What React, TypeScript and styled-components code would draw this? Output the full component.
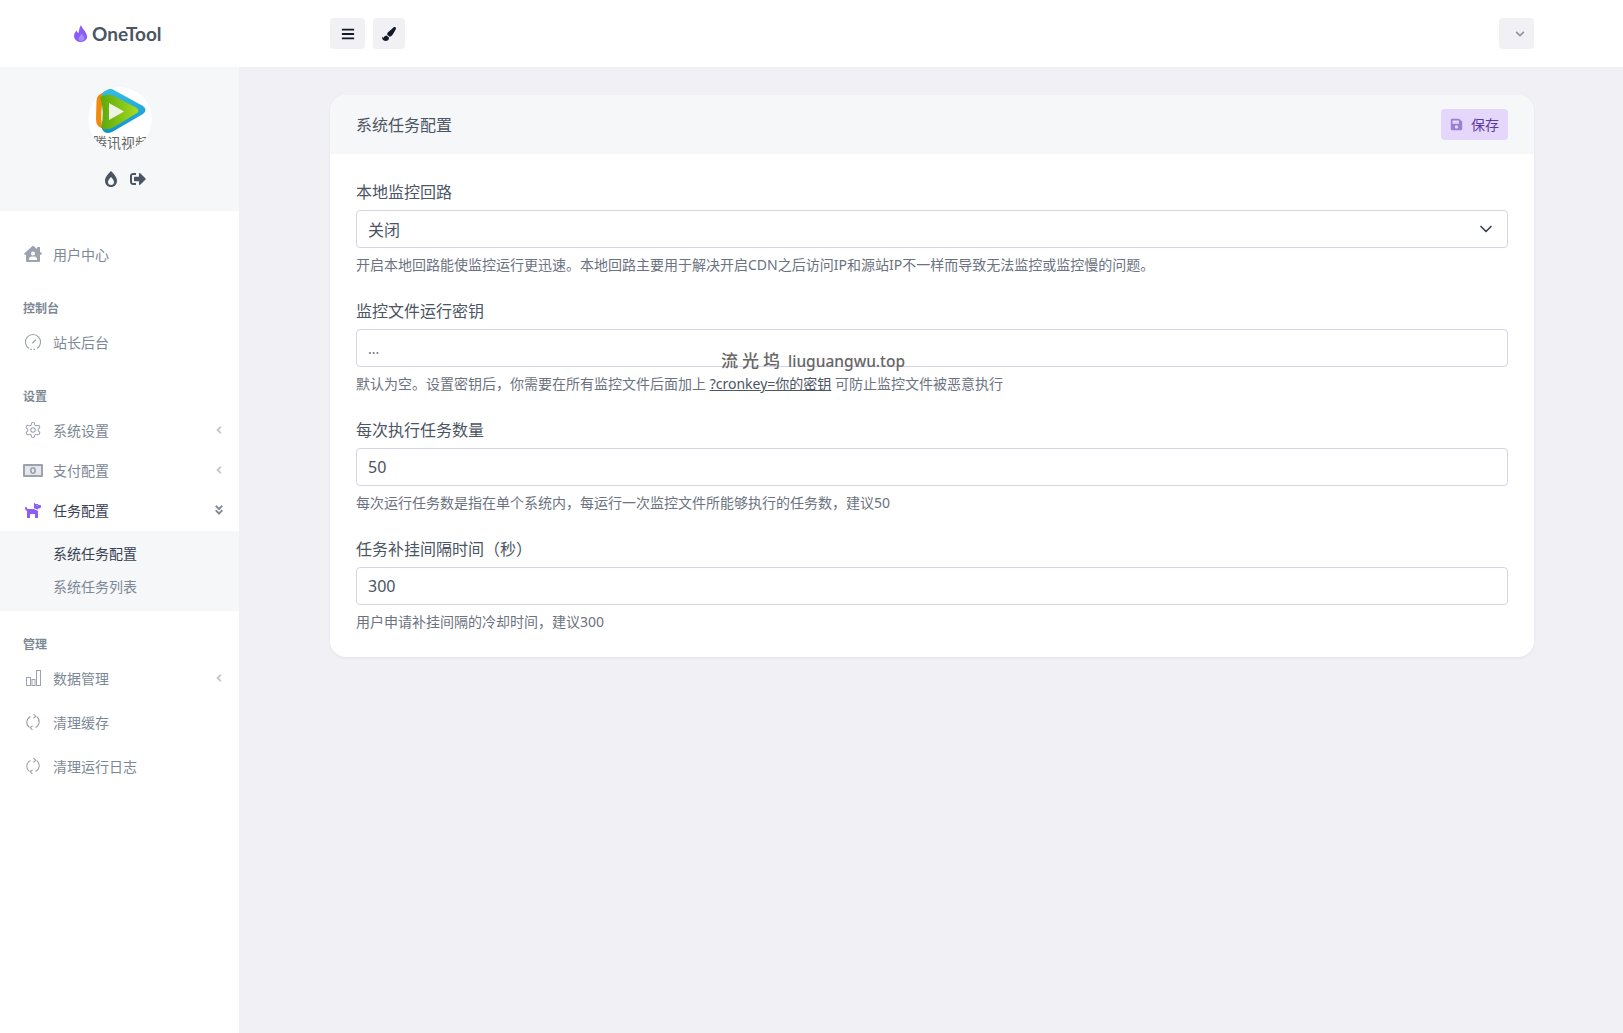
import React from 'react';
import styled, { createGlobalStyle } from 'styled-components';
import { ChevronDown } from 'lucide-react';
import {
  FaAngleDoubleDown,
  FaAngleLeft,
  FaBars,
  FaBurn,
  FaChevronDown,
  FaDog,
  FaHouseUser,
  FaPaintBrush,
  FaSave,
  FaSignOutAlt,
} from 'react-icons/fa';

const GlobalStyle = createGlobalStyle`
  html, body { margin: 0; padding: 0; }
  body {
    background: #f0f0f5;
    font-family: "Noto Sans", "Noto Sans CJK SC", sans-serif;
    color: #4b5563;
  }
  * { box-sizing: border-box; }
`;

const Page = styled.div`
  position: relative;
  width: 1623px;
  height: 1033px;
  overflow: hidden;
  display: flex;
  flex-direction: column;
`;

const Header = styled.header`
  height: 67px;
  flex: none;
  background: #fff;
  display: flex;
  align-items: center;
  padding-right: 89px;
`;

const Brand = styled.div`
  width: 330px;
  padding-left: 74px;
  padding-bottom: 1px;
  display: flex;
  align-items: center;
  gap: 4px;
  font-family: Lato, sans-serif;
  font-size: 19px;
  font-weight: 700;
  color: #4b5563;
`;

const ToolButton = styled.button<{ $wide?: boolean }>`
  width: ${(p) => (p.$wide ? 35 : 32)}px;
  height: 31px;
  margin-right: 8px;
  border: 0;
  border-radius: 4px;
  background: #f0f0f5;
  color: #111827;
  font-size: 14px;
  display: flex;
  align-items: center;
  justify-content: center;
  padding: 0;
`;

const HeaderSpacer = styled.div`
  flex: 1;
`;

const UserButton = styled(ToolButton)`
  width: 35px;
  margin-right: 0;
  padding-left: 7px;
  color: #8b95a1;
  font-size: 10px;
`;

const Body = styled.div`
  flex: 1;
  display: flex;
  min-height: 0;
`;

const Sidebar = styled.aside`
  width: 239px;
  flex: none;
  background: #fff;
`;

const Profile = styled.div`
  height: 144px;
  background: #f6f7f9;
  padding-top: 20px;
  display: flex;
  flex-direction: column;
  align-items: center;
`;

const ProfileIcons = styled.div`
  margin-top: 20px;
  margin-left: 10px;
  display: flex;
  gap: 11px;
  color: #4b5563;
  font-size: 16px;
  align-items: center;
`;

const Nav = styled.nav`
  padding-top: 21px;
`;

const NavItem = styled.div<{ $height?: number; $active?: boolean }>`
  height: ${(p) => p.$height ?? 40}px;
  padding: 0 14px 0 24px;
  display: flex;
  align-items: center;
  font-size: 14px;
  color: ${(p) => (p.$active ? '#374151' : '#7d8896')};
`;

const NavIcon = styled.span<{ $active?: boolean }>`
  width: 29px;
  flex: none;
  display: flex;
  align-items: center;
  color: ${(p) => (p.$active ? '#8b5cf6' : '#9ca3af')};
  font-size: 18px;
`;

const MoneyNavIcon = styled(NavIcon)`
  margin-left: -1px;
  width: 30px;
`;

const NavLabel = styled.span`
  flex: 1;
`;

const Arrow = styled.span`
  color: #c2c7ce;
  font-size: 12px;
  display: flex;
  align-items: center;
`;

const ActiveArrow = styled(Arrow)`
  color: #7d8896;
`;

const NavHeading = styled.div<{ $top?: number; $bottom?: number }>`
  margin-top: ${(p) => p.$top ?? 23}px;
  margin-bottom: ${(p) => p.$bottom ?? 1}px;
  height: 20px;
  line-height: 20px;
  padding-left: 23px;
  font-size: 12px;
  font-weight: 700;
  color: #7d8896;
`;

const SubMenu = styled.div`
  height: 80px;
  margin-top: 1px;
  background: #f6f7f9;
  padding-top: 6px;
`;

const SubItem = styled.div<{ $active?: boolean }>`
  height: 33px;
  line-height: 33px;
  padding-left: 53px;
  font-size: 14px;
  color: ${(p) => (p.$active ? '#374151' : '#7d8896')};
`;

const Main = styled.main`
  flex: 1;
  padding: 28px 89px 0 91px;
`;

const Card = styled.section`
  background: #fff;
  border-radius: 16px;
  overflow: hidden;
  box-shadow: 0 1px 3px rgba(90, 90, 120, 0.08);
`;

const CardHeader = styled.div`
  height: 59px;
  background: #f6f7f9;
  padding: 0 26px;
  display: flex;
  align-items: center;
  justify-content: space-between;
  font-size: 16px;
  color: #4b5563;
`;

const CardTitle = styled.span`
  margin-top: -2px;
`;

const SaveButton = styled.button`
  width: 67px;
  height: 31px;
  border: 0;
  border-radius: 4px;
  background: #e5d6fb;
  color: #5b3a9f;
  font-family: inherit;
  font-size: 14px;
  display: flex;
  align-items: center;
  justify-content: center;
  gap: 8px;
  padding: 0;
  svg { color: #9a80cf; font-size: 13px; }
  span { margin-top: -2px; }
`;

const Form = styled.form`
  padding: 26px 26px 25px;
`;

const Field = styled.div`
  margin-bottom: 24px;
  &:last-child { margin-bottom: 0; }
`;

const FieldLabel = styled.label`
  display: block;
  height: 24px;
  line-height: 24px;
  margin-bottom: 6px;
  font-size: 16px;
  color: #4b5563;
`;

const InputBox = styled.div`
  height: 38px;
  border: 1px solid #d6d3e6;
  border-radius: 4px;
  padding: 0 11px;
  display: flex;
  align-items: center;
  justify-content: space-between;
  font-size: 16px;
  color: #4b5563;
`;

const Placeholder = styled.span`
  font-size: 14px;
  color: #6b7280;
`;

const SelectArrow = styled.span`
  display: flex;
  color: #374151;
`;

const Help = styled.p`
  margin: 7px 0 0;
  height: 20px;
  line-height: 20px;
  font-size: 14px;
  color: #6b7280;
  a { color: #4b5563; text-decoration: underline; }
`;

const Watermark = styled.div`
  position: absolute;
  left: 721px;
  top: 349px;
  font-size: 15.5px;
  font-weight: 500;
  line-height: 24px;
  color: #666;
  white-space: nowrap;
  span { letter-spacing: 4px; font-size: 17px; }
`;

const BrandFlame = () => (
  <svg width="14" height="17" viewBox="0 0 14 17">
    <path d="M7 0C7.500 3 12 6 13 10.500C13.800 14 11 17 7 17C3 17 0 14.300 0 11C0 8.500 1.500 6.500 2.800 5.500C3 7 3.800 8 4.500 8C5 5 5.500 2 7 0Z" fill="#8b5cf6" />
    <path d="M7.500 8.500C9 10.500 10.500 12 10.500 13.500C10.500 15 9 16 7 16C5.500 16 4.500 15.300 4.500 14C4.500 12.500 6.500 11 7.500 8.500Z" fill="#a78bfa" />
  </svg>
);

const GaugeIcon = () => (
  <svg width="18" height="18" viewBox="0 0 18 18" fill="none" stroke="currentColor" strokeWidth="1.1">
    <path d="M5 15.5A7.6 7.6 0 1 1 13 15.5" />
    <path d="M6.5 16.4h5" strokeDasharray="1.5 1.5" />
    <path d="M8.4 10.2l3.4-3.4" strokeWidth="1.4" />
  </svg>
);

const GearIcon = () => (
  <svg width="18" height="18" viewBox="0 0 24 24" fill="none" stroke="currentColor" strokeWidth="1.4">
    <path d="M12.22 2h-.44a2 2 0 0 0-2 2v.18a2 2 0 0 1-1 1.73l-.43.25a2 2 0 0 1-2 0l-.15-.08a2 2 0 0 0-2.73.73l-.22.38a2 2 0 0 0 .73 2.73l.15.1a2 2 0 0 1 1 1.72v.51a2 2 0 0 1-1 1.74l-.15.09a2 2 0 0 0-.73 2.73l.22.38a2 2 0 0 0 2.73.73l.15-.08a2 2 0 0 1 2 0l.43.25a2 2 0 0 1 1 1.73V20a2 2 0 0 0 2 2h.44a2 2 0 0 0 2-2v-.18a2 2 0 0 1 1-1.73l.43-.25a2 2 0 0 1 2 0l.15.08a2 2 0 0 0 2.73-.73l.22-.39a2 2 0 0 0-.73-2.73l-.15-.08a2 2 0 0 1-1-1.74v-.5a2 2 0 0 1 1-1.74l.15-.09a2 2 0 0 0 .73-2.73l-.22-.38a2 2 0 0 0-2.73-.73l-.15.08a2 2 0 0 1-2 0l-.43-.25a2 2 0 0 1-1-1.73V4a2 2 0 0 0-2-2z" />
    <circle cx="12" cy="12" r="3" />
  </svg>
);

const MoneyIcon = () => (
  <svg width="20" height="13" viewBox="0 0 20 13">
    <rect width="20" height="13" rx="1" fill="#9ca3af" />
    <rect x="2" y="2" width="16" height="9" fill="#e5e7eb" />
    <ellipse cx="10" cy="6.500" rx="3" ry="3.500" fill="#9ca3af" />
    <ellipse cx="10" cy="6.500" rx="1.300" ry="2" fill="#e5e7eb" />
  </svg>
);

const ChartIcon = () => (
  <svg width="18" height="18" viewBox="0 0 18 18" fill="none" stroke="currentColor" strokeWidth="1">
    <rect x="2.5" y="8.500" width="4" height="8" />
    <rect x="8" y="10.5" width="3" height="6" />
    <rect x="12.5" y="1.5" width="4" height="15" />
  </svg>
);

const RefreshIcon = () => (
  <svg width="18" height="18" viewBox="0 0 18 18" fill="none" stroke="currentColor" strokeWidth="1.1">
    <path d="M6.5 3.4A6.6 6.6 0 0 0 5.2 14.4" />
    <path d="M11.5 14.6A6.6 6.6 0 0 0 12.8 3.6" />
    <path d="M9.6 1.2L11.8 3.4 9.4 5.2" />
    <path d="M8.4 16.8L6.2 14.6 8.6 12.8" />
  </svg>
);

// drawn logo, the source is a small raster avatar
const Avatar = () => (
  <svg width="64" height="64" viewBox="0 0 64 64">
    <defs>
      <clipPath id="avatar-clip">
        <circle cx="32" cy="32" r="32" />
      </clipPath>
      <linearGradient id="avatar-blue" x1="0" y1="0" x2="0" y2="1">
        <stop offset="0" stopColor="#36bde6" />
        <stop offset="1" stopColor="#1291cc" />
      </linearGradient>
      <linearGradient id="avatar-green" x1="0" y1="0" x2="1" y2="0">
        <stop offset="0" stopColor="#5aa80c" />
        <stop offset="1" stopColor="#a6dc1e" />
      </linearGradient>
    </defs>
    <g clipPath="url(#avatar-clip)">
      <circle cx="32" cy="32" r="32" fill="#fff" />
      <path d="M14 6Q9 7 8.500 14L8 32Q8 40 14 41Q12 24 16 6Z" fill="#f08a0c" />
      <path d="M14 7Q17 0 24 2L55 19Q60 23 55 27L24 45Q17 48 14 42Q17 24 14 7Z" fill="url(#avatar-blue)" />
      <path d="M12 10Q19 6 26 9L49 21Q52 24 49 26L26 40Q19 44 13 41Q17 25 12 10Z" fill="url(#avatar-green)" />
      <path d="M21 16L36 24.500L21 33Z" fill="#eef3e4" />
      <text x="33" y="61" textAnchor="middle" fontSize="14" fill="#666" fontFamily="'Noto Sans CJK SC', sans-serif">腾讯视频</text>
    </g>
  </svg>
);

export default function App() {
  return (
    <Page>
      <GlobalStyle />
      <Header>
        <Brand>
          <BrandFlame />
          OneTool
        </Brand>
        <ToolButton $wide>
          <FaBars />
        </ToolButton>
        <ToolButton>
          <FaPaintBrush />
        </ToolButton>
        <HeaderSpacer />
        <UserButton>
          <FaChevronDown />
        </UserButton>
      </Header>
      <Body>
        <Sidebar>
          <Profile>
            <Avatar />
            <ProfileIcons>
              <FaBurn />
              <FaSignOutAlt />
            </ProfileIcons>
          </Profile>
          <Nav>
            <NavItem $height={44}>
              <NavIcon><FaHouseUser /></NavIcon>
              <NavLabel>用户中心</NavLabel>
            </NavItem>
            <NavHeading>控制台</NavHeading>
            <NavItem $height={44}>
              <NavIcon><GaugeIcon /></NavIcon>
              <NavLabel>站长后台</NavLabel>
            </NavItem>
            <NavHeading $bottom={3}>设置</NavHeading>
            <NavItem>
              <NavIcon><GearIcon /></NavIcon>
              <NavLabel>系统设置</NavLabel>
              <Arrow><FaAngleLeft /></Arrow>
            </NavItem>
            <NavItem>
              <MoneyNavIcon><MoneyIcon /></MoneyNavIcon>
              <NavLabel>支付配置</NavLabel>
              <Arrow><FaAngleLeft /></Arrow>
            </NavItem>
            <NavItem $active>
              <NavIcon $active><FaDog /></NavIcon>
              <NavLabel>任务配置</NavLabel>
              <ActiveArrow><FaAngleDoubleDown /></ActiveArrow>
            </NavItem>
            <SubMenu>
              <SubItem $active>系统任务配置</SubItem>
              <SubItem>系统任务列表</SubItem>
            </SubMenu>
            <NavHeading $top={24} $bottom={1}>管理</NavHeading>
            <NavItem $height={44}>
              <NavIcon><ChartIcon /></NavIcon>
              <NavLabel>数据管理</NavLabel>
              <Arrow><FaAngleLeft /></Arrow>
            </NavItem>
            <NavItem $height={44}>
              <NavIcon><RefreshIcon /></NavIcon>
              <NavLabel>清理缓存</NavLabel>
            </NavItem>
            <NavItem $height={44}>
              <NavIcon><RefreshIcon /></NavIcon>
              <NavLabel>清理运行日志</NavLabel>
            </NavItem>
          </Nav>
        </Sidebar>
        <Main>
          <Card>
            <CardHeader>
              <CardTitle>系统任务配置</CardTitle>
              <SaveButton type="button">
                <FaSave />
                <span>保存</span>
              </SaveButton>
            </CardHeader>
            <Form>
              <Field>
                <FieldLabel>本地监控回路</FieldLabel>
                <InputBox>
                  关闭
                  <SelectArrow><ChevronDown size={20} /></SelectArrow>
                </InputBox>
                <Help>开启本地回路能使监控运行更迅速。本地回路主要用于解决开启CDN之后访问IP和源站IP不一样而导致无法监控或监控慢的问题。</Help>
              </Field>
              <Field>
                <FieldLabel>监控文件运行密钥</FieldLabel>
                <InputBox>
                  <Placeholder>...</Placeholder>
                </InputBox>
                <Help>
                  默认为空。设置密钥后，你需要在所有监控文件后面加上 <a>?cronkey=你的密钥</a> 可防止监控文件被恶意执行
                </Help>
              </Field>
              <Field>
                <FieldLabel>每次执行任务数量</FieldLabel>
                <InputBox>50</InputBox>
                <Help>每次运行任务数是指在单个系统内，每运行一次监控文件所能够执行的任务数，建议50</Help>
              </Field>
              <Field>
                <FieldLabel>任务补挂间隔时间（秒）</FieldLabel>
                <InputBox>300</InputBox>
                <Help>用户申请补挂间隔的冷却时间，建议300</Help>
              </Field>
            </Form>
          </Card>
        </Main>
      </Body>
      <Watermark>
        <span>流光坞</span> liuguangwu.top
      </Watermark>
    </Page>
  );
}
